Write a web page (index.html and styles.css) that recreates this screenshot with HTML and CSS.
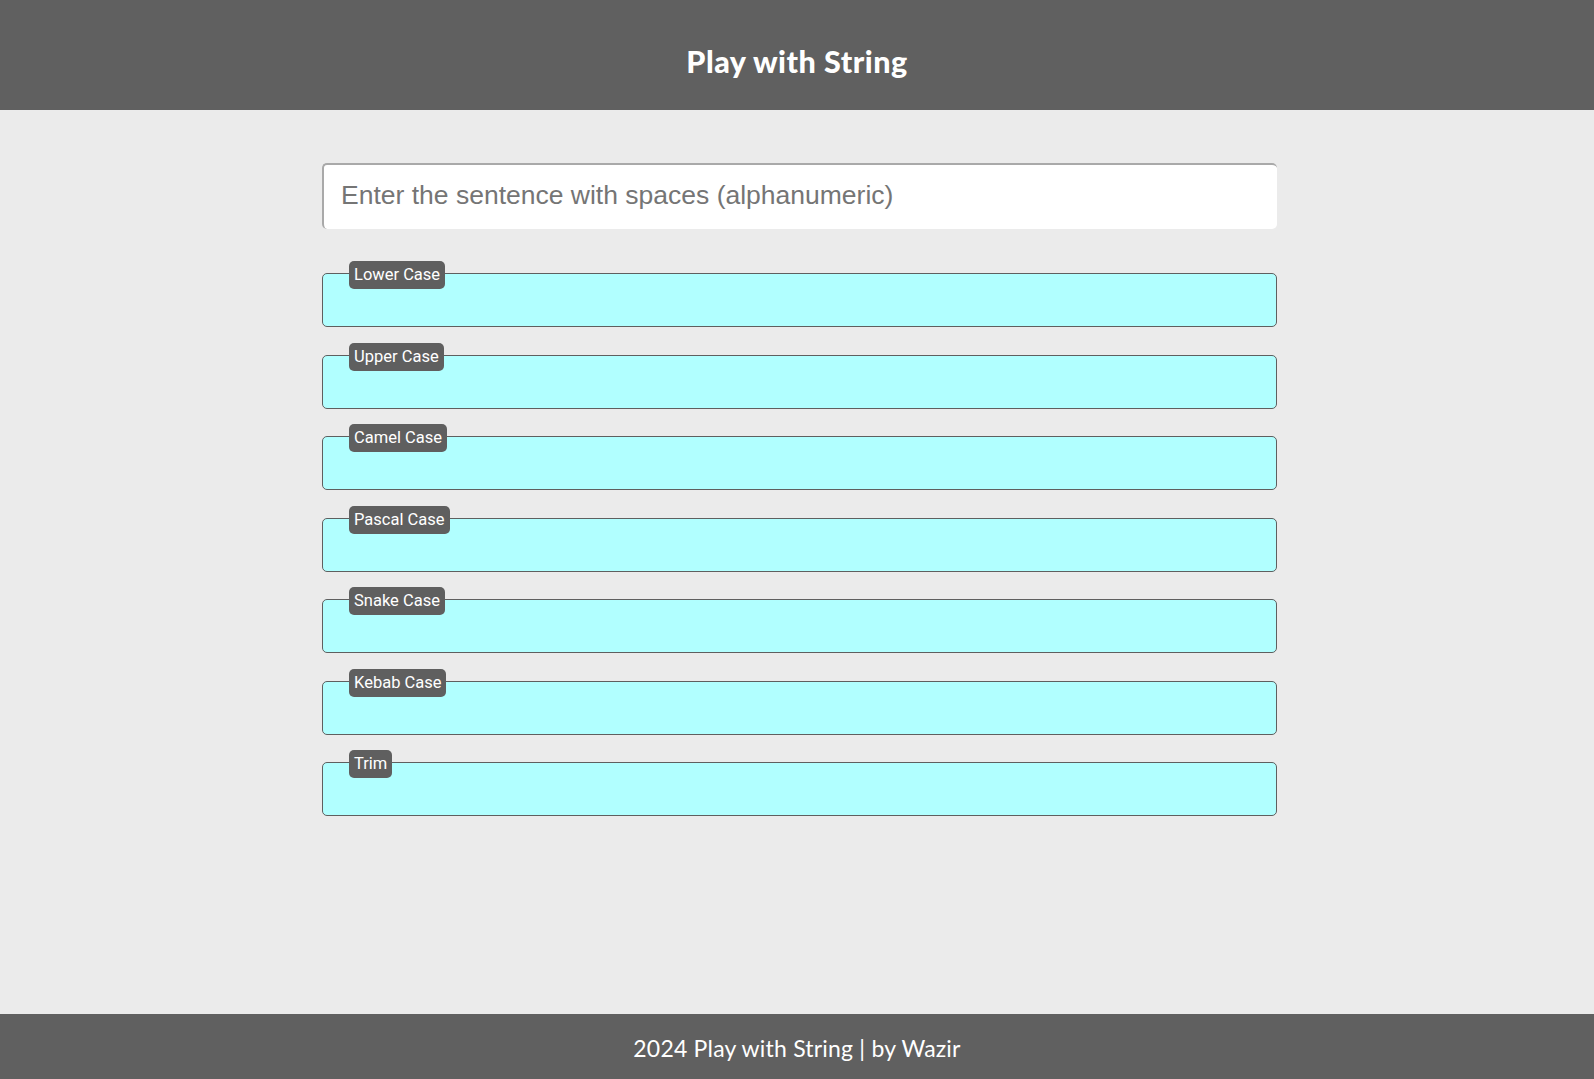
FILE: index.html
```html
<!DOCTYPE html>
<html lang="en">
<head>
<meta charset="utf-8">
<title>Play with String</title>
<link rel="stylesheet" href="styles.css">
</head>
<body>
<div class="page">
  <header class="site-header">
    <h1 class="title">Play with String</h1>
  </header>
  <main class="main">
    <div class="container">
      <input class="sentence" type="text" placeholder="Enter the sentence with spaces (alphanumeric)">
      <div class="results">
        <div class="result-item"><span class="result-label">Lower Case</span><div class="result-box"></div></div>
        <div class="result-item"><span class="result-label">Upper Case</span><div class="result-box"></div></div>
        <div class="result-item"><span class="result-label">Camel Case</span><div class="result-box"></div></div>
        <div class="result-item"><span class="result-label">Pascal Case</span><div class="result-box"></div></div>
        <div class="result-item"><span class="result-label">Snake Case</span><div class="result-box"></div></div>
        <div class="result-item"><span class="result-label">Kebab Case</span><div class="result-box"></div></div>
        <div class="result-item"><span class="result-label">Trim</span><div class="result-box"></div></div>
      </div>
    </div>
  </main>
  <footer class="site-footer">
    <p class="footer-text">2024 Play with String | by Wazir</p>
  </footer>
</div>
</body>
</html>
```
FILE: styles.css
```css
* { box-sizing: border-box; }
html, body { margin: 0; padding: 0; }
body {
  background: #ebebeb;
  font-family: "Liberation Sans", Arial, sans-serif;
}
.page {
  min-height: 100vh;
  display: flex;
  flex-direction: column;
}
.site-header {
  background: #606060;
  height: 110px;
  display: flex;
  align-items: center;
  justify-content: center;
}
.title {
  margin: 0;
  padding-top: 12px;
  color: #ffffff;
  font-family: "Comic Sans MS", "Lato", sans-serif;
  font-weight: 900;
  font-size: 30.5px;
  letter-spacing: 0.5px;
}
.main {
  flex: 1;
  padding-left: 5px;
}
.container {
  width: 955px;
  margin: 0 auto;
  padding-top: 53px;
}
.sentence {
  display: block;
  width: 100%;
  height: 66px;
  border-style: solid;
  border-color: #a9a9a9;
  border-width: 2px 0 0 2px;
  border-radius: 5px;
  background: #ffffff;
  padding: 0 17px 4px;
  font-family: "Liberation Sans", Arial, sans-serif;
  font-size: 26.5px;
  color: #333;
  outline: none;
}
.sentence::placeholder { color: #757575; }
.results {
  margin-top: 44px;
  display: flex;
  flex-direction: column;
  gap: 27.5px;
}
.result-item {
  position: relative;
}
.result-box {
  height: 54px;
  background: #b1ffff;
  border: 1px solid #5f5f5f;
  border-radius: 5px;
}
.result-label {
  position: absolute;
  top: -12px;
  left: 27px;
  height: 28px;
  line-height: 28px;
  padding: 0 5px;
  background: #5f5f5f;
  color: #ffffff;
  border-radius: 5px;
  font-family: Roboto, "Liberation Sans", sans-serif;
  font-size: 16.5px;
}
.site-footer {
  background: #606060;
  height: 65px;
  display: flex;
  align-items: center;
  justify-content: center;
}
.footer-text {
  margin: 0;
  padding-top: 2px;
  color: #ffffff;
  font-family: "Comic Sans MS", "Lato", sans-serif;
  font-size: 23px;
  letter-spacing: 0.2px;
}
```
